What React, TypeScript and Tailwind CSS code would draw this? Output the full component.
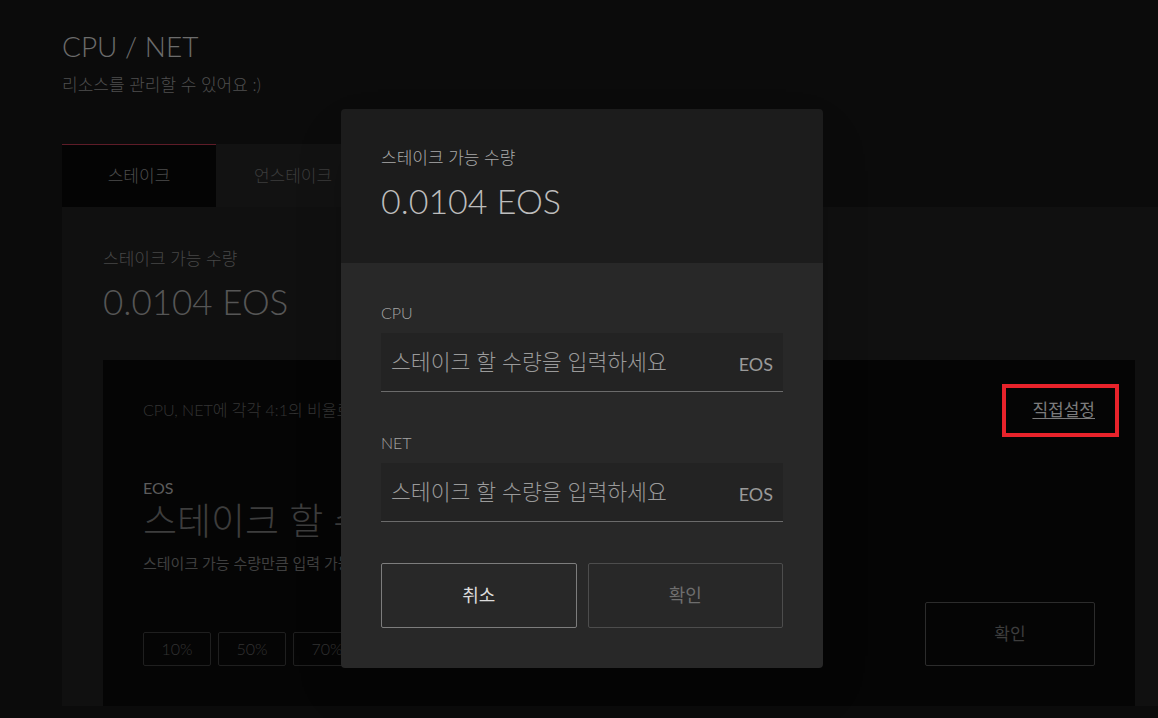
import React from "react";

const font = "font-['Lato','Noto_Sans_CJK_KR',sans-serif]";

function Tabs() {
  return (
    <div className="flex mt-[47px]">
      <div className="w-[154px] h-[63px] bg-[#040404] border-t border-[#5e1c28] flex items-center justify-center text-[17px] font-light text-[#4d4d4d]">
        스테이크
      </div>
      <div className="w-[154px] h-[63px] bg-[#121212] flex items-center justify-center text-[17px] font-light text-[#3c3c3c]">
        언스테이크
      </div>
    </div>
  );
}

function StakePanel() {
  return (
    <div className="w-[1114px] bg-[#101010] px-[41px] pt-[40px]">
      <div className="text-[17px] leading-[24px] font-light text-[#474747]">스테이크 가능 수량</div>
      <div className="text-[35px] leading-[44px] font-light text-[#565656] mt-[8px]">0.0104 EOS</div>

      <div className="mt-[37px] bg-[#050505] px-[40px] pt-[38px] pb-[40px]">
        <div className="flex items-center justify-between">
          <span className="text-[16px] leading-[24px] font-light text-[#343434]">
            CPU, NET에 각각 4:1의 비율로 스테이크 됩니다
          </span>
          <span className="relative text-[17px] leading-[24px] text-[#7c7c7c] underline underline-offset-2">
            직접설정
            <span className="absolute -left-[30px] -right-[24px] -top-[14px] -bottom-[15px] border-4 border-[#e8232b]" />
          </span>
        </div>

        <div className="flex items-end justify-between mt-[55px]">
          <div className="flex flex-col">
            <div className="text-[16px] leading-[22px] text-[#5c5c5c]">EOS</div>
            <div className="text-[37px] leading-[44px] font-light text-[#3d3d3d]">스테이크 할 수량을 입력하세요</div>
            <div className="text-[15px] leading-[20px] text-[#3f3f3f] mt-[10px]">
              스테이크 가능 수량만큼 입력 가능합니다
            </div>
            <div className="flex gap-[7px] mt-[59px]">
              {["10%", "50%", "70%", "100%"].map((p) => (
                <button
                  key={p}
                  className="w-[68px] h-[34px] border border-[#1f1f1f] rounded-[2px] text-[16px] font-light text-[#333]"
                >
                  {p}
                </button>
              ))}
            </div>
          </div>
          <button className="w-[170px] h-[64px] border border-[#2c2c2c] rounded-[2px] text-[17px] text-[#3d3d3d]">
            확인
          </button>
        </div>
      </div>
    </div>
  );
}

function AmountInput({ label, first }: { label: string; first?: boolean }) {
  return (
    <div className={first ? "" : "mt-[40px]"}>
      <div className="text-[16px] leading-[22px] font-light text-[#a5a5a5]">{label}</div>
      <div className="mt-[9px] h-[59px] bg-[#232323] border-b border-[#6b6b6b] flex items-center justify-between px-[10px]">
        <span className="text-[21.6px] font-light text-[#9a9a9a]">스테이크 할 수량을 입력하세요</span>
        <span className="text-[18px] text-[#9a9a9a] mt-[4px]">EOS</span>
      </div>
    </div>
  );
}

function StakeModal() {
  return (
    <div className="absolute left-[341px] top-[109px] w-[482px] rounded-[4px] overflow-hidden shadow-2xl">
      <div className="bg-[#1c1c1c] h-[154px] px-[40px] pt-[37px]">
        <div className="text-[17px] leading-[24px] font-light text-[#a9a9a9]">스테이크 가능 수량</div>
        <div className="text-[34px] leading-[44px] font-light text-[#bdbdbd] mt-[9px]">0.0104 EOS</div>
      </div>
      <div className="bg-[#282828] px-[40px] pt-[39px] pb-[40px]">
        <AmountInput label="CPU" first />
        <AmountInput label="NET" />
        <div className="flex gap-[11px] mt-[41px]">
          <button className="flex-1 h-[65px] border border-[#7d7d7d] rounded-[2px] text-[18px] text-[#dcdcdc]">
            취소
          </button>
          <button className="flex-1 h-[65px] border border-[#4d4d4d] rounded-[2px] text-[18px] text-[#6e6e6e]">
            확인
          </button>
        </div>
      </div>
    </div>
  );
}

export default function App() {
  return (
    <div className={`relative w-[1158px] h-[718px] overflow-hidden bg-[#0b0b0b] ${font}`}>
      <div className="pl-[62px] pt-[28px]">
        <h1 className="text-[28px] leading-[36px] font-light text-[#6c6c6c]">CPU / NET</h1>
        <p className="mt-[9px] text-[17px] leading-[24px] font-light text-[#4f4f4f]">리소스를 관리할 수 있어요 :)</p>
        <Tabs />
        <StakePanel />
      </div>
      <StakeModal />
    </div>
  );
}
